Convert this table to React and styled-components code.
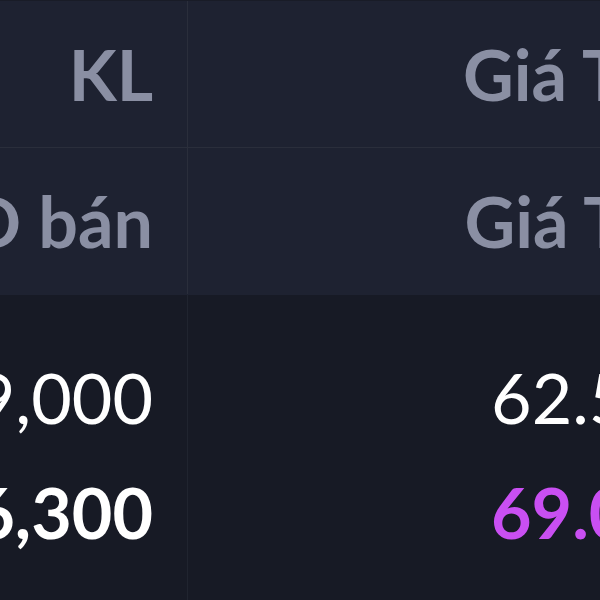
import React from 'react';
import styled, { createGlobalStyle } from 'styled-components';

const GlobalStyle = createGlobalStyle`
  html, body {
    margin: 0;
    padding: 0;
    background: #171a25;
  }
`;

const headRows = [
  ['KL', 'Giá TB'],
  ['Tổng KLĐ bán', 'Giá TC'],
];

// one entry per column, listed top to bottom
const bodyCols = [
  [
    { text: '29,000', tone: 'plain', bold: false },
    { text: '16,300', tone: 'plain', bold: true },
  ],
  [
    { text: '62.50', tone: 'plain', bold: false },
    { text: '69.00', tone: 'ceil', bold: true },
  ],
];

const App = () => {
  return (
    <>
      <GlobalStyle />
      <StyledBoard>
        <Table>
          <Head>
            {headRows.map((row, i) => (
              <HeadRow key={i} $last={i === headRows.length - 1}>
                {row.map((text, j) => (
                  <HeadCell key={j} $first={j === 0}>
                    <Label>{text}</Label>
                  </HeadCell>
                ))}
              </HeadRow>
            ))}
          </Head>
          <Body>
            {bodyCols.map((col, j) => (
              <BodyCol key={j} $first={j === 0}>
                {col.map((cell, i) => (
                  <ValueCell key={i}>
                    <Value $tone={cell.tone} $bold={cell.bold}>
                      {cell.text}
                    </Value>
                  </ValueCell>
                ))}
              </BodyCol>
            ))}
          </Body>
        </Table>
      </StyledBoard>
    </>
  );
};

const StyledBoard = styled.main`
  width: 600px;
  height: 600px;
  overflow: hidden;
  background: #171a25;
  font-family: Lato, 'Noto Sans', sans-serif;
`;

const Table = styled.div`
  width: 704px;
  height: 600px;
  display: flex;
  flex-direction: column;
`;

const Head = styled.div`
  background: #1e2231;
  border-top: 1px solid #191c27;
`;

const HeadRow = styled.div`
  display: grid;
  grid-template-columns: 188px 1fr;
  border-bottom: 1px solid ${(p) => (p.$last ? '#1e2231' : '#2a2e3b')};
`;

const HeadCell = styled.div`
  height: 146px;
  display: flex;
  justify-content: flex-end;
  align-items: center;
  overflow: hidden;
  padding-right: 34px;
  border-right: ${(p) => (p.$first ? '1px solid #2a2e3b' : 'none')};
`;

const Body = styled.div`
  flex: 1;
  display: grid;
  grid-template-columns: 188px 1fr;
`;

const BodyCol = styled.div`
  padding-top: 44px;
  border-right: ${(p) => (p.$first ? '1px solid #20242f' : 'none')};
  overflow: hidden;
`;

const ValueCell = styled.div`
  height: 115px;
  display: flex;
  justify-content: flex-end;
  align-items: center;
  padding-right: 34px;
`;

const Label = styled.span`
  font-size: 70px;
  line-height: 1.2;
  font-weight: 700;
  color: #8a8fa3;
  white-space: nowrap;
`;

const Value = styled.span`
  font-size: 70px;
  line-height: 1.2;
  font-weight: ${(p) => (p.$bold ? 700 : 400)};
  color: ${(p) => (p.$tone === 'ceil' ? '#c94ff2' : '#ffffff')};
  white-space: nowrap;
`;

export default App;
